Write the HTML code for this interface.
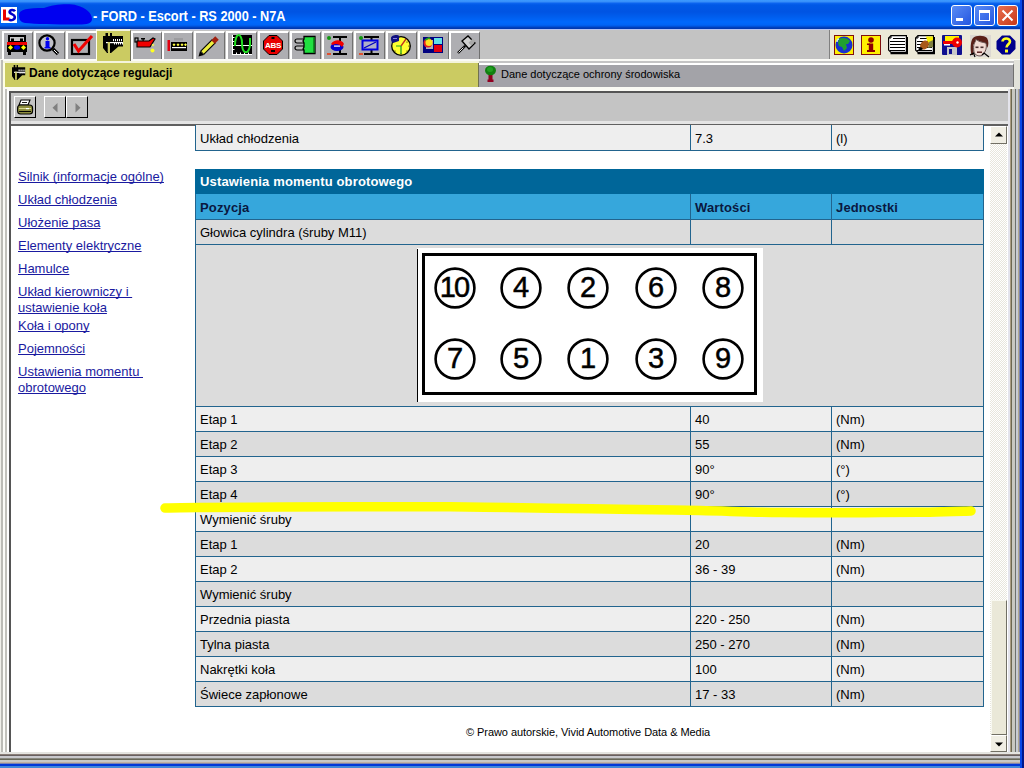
<!DOCTYPE html>
<html><head><meta charset="utf-8">
<style>
*{margin:0;padding:0;box-sizing:border-box}
html,body{width:1024px;height:768px;overflow:hidden;background:#C3C3C3;font-family:"Liberation Sans",sans-serif}
.a{position:absolute}
svg.a{overflow:visible}
#title{left:0;top:0;width:1024px;height:29px;background:linear-gradient(#3C9AFF 0px,#3890FA 1.5px,#0A62EE 3.5px,#0058E6 5px,#0054E3 12px,#005EEE 17px,#0068FC 22px,#0064F6 25px,#0050D8 26.5px,#0038B0 28px,#0038B0 29px)}
#ttext{left:93px;top:8px;color:#fff;font-weight:bold;font-size:14px;line-height:17px;white-space:nowrap;transform:scaleX(0.91);transform-origin:0 0;letter-spacing:0px}
.wb{top:5px;width:21px;height:21px;border:1px solid #fff;border-radius:3px}
#rframe{left:1020px;top:0;width:4px;height:768px;background:linear-gradient(90deg,#0848E8 0 2px,#00188C 2px 4px)}
#bframe{left:0;top:764px;width:1020px;height:4px;background:linear-gradient(#0038D8 0 2px,#4088D8 2px 4px)}
.t{font-size:13px;line-height:15px;color:#000;white-space:nowrap}
.num{width:60px;text-align:center;font-size:29px;line-height:34px;color:#000;-webkit-text-stroke:0.5px #000}
</style></head><body>
<!-- title -->
<div id="title" class="a"></div>
<div class="a" style="left:1px;top:7px;width:16px;height:16px;background:#fff"></div>
<svg class="a" style="left:1px;top:7px" width="16" height="16" viewBox="0 0 16 16"><path d="M2 2.5 L5 2.5 L5 10.5 L8.5 10.5 L8.5 13.5 L2 13.5 Z" fill="#E80000"/><path d="M14 4.2 C13 2.6, 9 2.4, 8.6 4.8 C8.3 7.2, 13.6 7, 13.8 9.8 C14 12.8, 10 14, 8 12.5" fill="none" stroke="#0000C8" stroke-width="2.6"/></svg>
<svg class="a" style="left:0;top:0" width="100" height="29" viewBox="0 0 100 29"><path d="M19 15 C19 9, 28 8, 44 8 C52 5, 68 3, 77 5.5 C86 8, 92 13, 92 19 C92 24, 85 25, 75 24.5 C55 24.5, 35 24, 25 23 C20 22, 19 19, 19 15 Z" fill="#0000F0"/></svg>
<div id="ttext" class="a">- FORD - Escort - RS 2000 - N7A</div>
<div class="a wb" style="left:951px;background:linear-gradient(135deg,#5A8CF5,#2456E0)"></div>
<div class="a wb" style="left:974px;background:linear-gradient(135deg,#5A8CF5,#2456E0)"></div>
<div class="a wb" style="left:997px;background:linear-gradient(135deg,#E87050,#C83818)"></div>
<div class="a" style="left:956px;top:18px;width:7px;height:3px;background:#fff"></div>
<div class="a" style="left:979px;top:10px;width:11px;height:11px;border:1px solid #fff;border-top:3px solid #fff"></div>
<svg class="a" style="left:1001px;top:9px" width="13" height="13" viewBox="0 0 13 13"><path d="M1.5 1.5 L11.5 11.5 M11.5 1.5 L1.5 11.5" stroke="#fff" stroke-width="2"/></svg>

<div class="a" style="left:0px;top:29px;width:1020px;height:1px;background:#B8C4F0;"></div>
<div class="a" style="left:0px;top:30px;width:1020px;height:29px;background:#C3C3C3;"></div>
<div class="a" style="left:0px;top:59px;width:1020px;height:2px;background:#FAFAF6;"></div>
<div class="a" style="left:0px;top:61px;width:1020px;height:2px;background:#C4C4C4;"></div>
<div class="a" style="left:2px;top:31px;width:31px;height:28px;background:#AEAEB2;border-left:2px solid #FFFFFF;border-top:2px solid #FFFFFF;border-right:1px solid #707070"></div>
<div class="a" style="left:34px;top:31px;width:31px;height:28px;background:#AEAEB2;border-left:2px solid #FFFFFF;border-top:2px solid #FFFFFF;border-right:1px solid #707070"></div>
<div class="a" style="left:66px;top:31px;width:31px;height:28px;background:#AEAEB2;border-left:2px solid #FFFFFF;border-top:2px solid #FFFFFF;border-right:1px solid #707070"></div>
<div class="a" style="left:131px;top:31px;width:31px;height:28px;background:#AEAEB2;border-left:2px solid #FFFFFF;border-top:2px solid #FFFFFF;border-right:1px solid #707070"></div>
<div class="a" style="left:162px;top:31px;width:31px;height:28px;background:#AEAEB2;border-left:2px solid #FFFFFF;border-top:2px solid #FFFFFF;border-right:1px solid #707070"></div>
<div class="a" style="left:194px;top:31px;width:31px;height:28px;background:#AEAEB2;border-left:2px solid #FFFFFF;border-top:2px solid #FFFFFF;border-right:1px solid #707070"></div>
<div class="a" style="left:226px;top:31px;width:31px;height:28px;background:#AEAEB2;border-left:2px solid #FFFFFF;border-top:2px solid #FFFFFF;border-right:1px solid #707070"></div>
<div class="a" style="left:258px;top:31px;width:31px;height:28px;background:#AEAEB2;border-left:2px solid #FFFFFF;border-top:2px solid #FFFFFF;border-right:1px solid #707070"></div>
<div class="a" style="left:290px;top:31px;width:31px;height:28px;background:#AEAEB2;border-left:2px solid #FFFFFF;border-top:2px solid #FFFFFF;border-right:1px solid #707070"></div>
<div class="a" style="left:322px;top:31px;width:31px;height:28px;background:#AEAEB2;border-left:2px solid #FFFFFF;border-top:2px solid #FFFFFF;border-right:1px solid #707070"></div>
<div class="a" style="left:354px;top:31px;width:31px;height:28px;background:#AEAEB2;border-left:2px solid #FFFFFF;border-top:2px solid #FFFFFF;border-right:1px solid #707070"></div>
<div class="a" style="left:386px;top:31px;width:31px;height:28px;background:#AEAEB2;border-left:2px solid #FFFFFF;border-top:2px solid #FFFFFF;border-right:1px solid #707070"></div>
<div class="a" style="left:418px;top:31px;width:31px;height:28px;background:#AEAEB2;border-left:2px solid #FFFFFF;border-top:2px solid #FFFFFF;border-right:1px solid #707070"></div>
<div class="a" style="left:449px;top:31px;width:31px;height:28px;background:#AEAEB2;border-left:2px solid #FFFFFF;border-top:2px solid #FFFFFF;border-right:1px solid #707070"></div>
<div class="a" style="left:96px;top:29px;width:35px;height:33px;background:#CBCB62;border-left:1px solid #FFFFF0;border-top:2px solid #F4F4E0;border-right:1px solid #6E6E58"></div>
<svg class="a" style="left:7px;top:35px" width="20" height="20" viewBox="0 0 20 20" ><rect x="1" y="0" width="18" height="7" fill="#000"/><rect x="3" y="2" width="14" height="4" fill="#C8C8C8"/><rect x="4" y="3.5" width="3" height="3.5" fill="#000"/><rect x="13" y="3.5" width="3" height="3.5" fill="#000"/>
<rect x="0" y="7" width="20" height="3" fill="#F00000"/><rect x="0" y="10" width="20" height="7" fill="#000"/>
<polygon points="1,12.5 3.5,10 6,12.5 3.5,15" fill="#FFFF00"/><polygon points="14,12.5 16.5,10 19,12.5 16.5,15" fill="#FFFF00"/>
<ellipse cx="10" cy="12.5" rx="3" ry="2.2" fill="#0000F0"/><rect x="1" y="17" width="3" height="3" fill="#000"/><rect x="16" y="17" width="3" height="3" fill="#000"/></svg>
<svg class="a" style="left:37px;top:34px" width="24" height="22" viewBox="0 0 24 22" ><line x1="16" y1="15" x2="21" y2="20" stroke="#000" stroke-width="3.2"/><line x1="17" y1="16" x2="20.5" y2="19.5" stroke="#fff" stroke-width="1"/>
<circle cx="10" cy="9" r="7.6" fill="#C0C0C8" stroke="#000" stroke-width="2.2"/>
<circle cx="10.5" cy="4.8" r="1.7" fill="#0000F0"/><rect x="8.5" y="7" width="4" height="7" fill="#0000F0"/><rect x="7.5" y="13" width="6" height="1.5" fill="#0000F0"/></svg>
<svg class="a" style="left:70px;top:34px" width="24" height="22" viewBox="0 0 24 22" ><rect x="2" y="6" width="17" height="14" fill="none" stroke="#000" stroke-width="2.2"/>
<polyline points="4,10 8.5,17 22,2" fill="none" stroke="#F00000" stroke-width="3"/></svg>
<svg class="a" style="left:103px;top:33px" width="21" height="21" viewBox="0 0 21 21" ><polygon points="0,3 2.5,3 2.5,0 5,0 5,3 7,3 7,0 9,0 9,3 20,3 20,13.5 15.5,13.5 8,20 7,20 7,9 5,9 5,20 4,20 0,15" fill="#000"/>
<rect x="3" y="9" width="17" height="1.2" fill="#fff"/><rect x="4.7" y="9" width="2.3" height="10" fill="#CBCB62"/>
<g fill="#fff"><rect x="10" y="6" width="1" height="2.2"/><rect x="12" y="6" width="1" height="2.2"/><rect x="14" y="6" width="1" height="2.2"/><rect x="16" y="6" width="1" height="2.2"/><rect x="18" y="6" width="1" height="2.2"/>
<rect x="11" y="10" width="1" height="1.5"/><rect x="13" y="10" width="1" height="1.5"/><rect x="15" y="10" width="1" height="1.5"/><rect x="17" y="10" width="1" height="1.5"/><rect x="19" y="10" width="1" height="1.5"/></g></svg>
<svg class="a" style="left:134px;top:36px" width="22" height="20" viewBox="0 0 22 20" ><rect x="1" y="2" width="3" height="4" fill="none" stroke="#000" stroke-width="1.2"/>
<rect x="7" y="2" width="4" height="1.5" fill="#000"/><rect x="8.5" y="3" width="1.2" height="2" fill="#000"/>
<polygon points="3,5 15,5 19,2 21,3 16,11 3,11" fill="#F00000" stroke="#000" stroke-width="1.2"/>
<circle cx="19" cy="9" r="1.3" fill="#E8E860"/><circle cx="18.5" cy="14.5" r="2" fill="#FFFF20"/></svg>
<svg class="a" style="left:166px;top:37px" width="22" height="18" viewBox="0 0 22 18" ><rect x="8" y="1" width="9" height="2.5" fill="#9C9CA0"/><rect x="1.5" y="3" width="2.5" height="11" fill="#E00010"/>
<rect x="5" y="5" width="16" height="9" fill="#000"/><rect x="6" y="10" width="14" height="1.2" fill="#fff"/>
<g fill="#FFFF40"><polygon points="8,6.3 9.5,7.8 8,9.3 6.5,7.8"/><polygon points="12,6.3 13.5,7.8 12,9.3 10.5,7.8"/><polygon points="16,6.3 17.5,7.8 16,9.3 14.5,7.8"/><polygon points="19.5,6.3 21,7.8 19.5,9.3 18,7.8"/></g></svg>
<svg class="a" style="left:198px;top:35px" width="22" height="22" viewBox="0 0 22 22" ><line x1="4" y1="18" x2="16" y2="6" stroke="#000" stroke-width="5.5"/><line x1="4.5" y1="17.5" x2="16" y2="6" stroke="#F0F040" stroke-width="3.2"/>
<line x1="15" y1="7" x2="19" y2="3" stroke="#A02010" stroke-width="5"/><polygon points="0.5,21.5 2,16 6,20" fill="#000"/></svg>
<svg class="a" style="left:232px;top:35px" width="20" height="20" viewBox="0 0 20 20" ><rect x="0" y="0" width="20" height="20" fill="#000"/><rect x="0" y="0" width="1" height="20" fill="#fff"/><rect x="0" y="19" width="20" height="1" fill="#fff"/>
<rect x="1" y="10" width="19" height="1" fill="#fff"/><g fill="#fff"><rect x="1" y="2" width="1.5" height="1"/><rect x="1" y="6" width="1.5" height="1"/><rect x="1" y="14" width="1.5" height="1"/><rect x="4" y="17.5" width="1" height="1.5"/><rect x="8" y="17.5" width="1" height="1.5"/><rect x="12" y="17.5" width="1" height="1.5"/><rect x="16" y="17.5" width="1" height="1.5"/></g>
<path d="M3 11 C3 -4, 10 -2, 10 8 C10 20, 17 20, 18 10 L18 3" fill="none" stroke="#20E020" stroke-width="2"/></svg>
<svg class="a" style="left:263px;top:35px" width="20" height="20" viewBox="0 0 20 20" ><polygon points="6,0.5 14,0.5 19.5,6 19.5,14 14,19.5 6,19.5 0.5,14 0.5,6" fill="#E80000" stroke="#000" stroke-width="1"/>
<text x="10" y="13.2" text-anchor="middle" font-family="Liberation Sans" font-weight="bold" font-size="8" fill="#fff" letter-spacing="-0.3">ABS</text><rect x="8" y="15" width="4" height="2" fill="#000"/><rect x="8.5" y="2" width="3" height="2" fill="#000"/></svg>
<svg class="a" style="left:294px;top:35px" width="22" height="20" viewBox="0 0 22 20" ><rect x="1" y="4" width="10" height="4" rx="2" fill="#B8B8B8" stroke="#000" stroke-width="1.2"/><rect x="1" y="11" width="10" height="4" rx="2" fill="#B8B8B8" stroke="#000" stroke-width="1.2"/>
<path d="M10 1.5 L21 1.5 L21 18.5 L10 18.5 L10 15 L9 14 L10 12 L10 8 L9 6 L10 4 Z" fill="#20E040" stroke="#000" stroke-width="1.3"/><rect x="19" y="2" width="1.5" height="16" fill="#109020"/></svg>
<svg class="a" style="left:326px;top:35px" width="22" height="22" viewBox="0 0 22 22" ><circle cx="3" cy="3" r="2" fill="#109810"/><rect x="1" y="18" width="4" height="2" fill="#E05030"/>
<rect x="7" y="1" width="14" height="2" fill="#000"/><rect x="7" y="18" width="14" height="2" fill="#000"/><rect x="13" y="2" width="2" height="17" fill="#000"/>
<ellipse cx="11" cy="12" rx="6.5" ry="4" fill="#0000D0"/><path d="M5 9 C8 4, 16 4, 18 9 L16 12 C14 9, 9 8, 7 10 Z" fill="#F00000"/><rect x="8" y="10.5" width="6" height="1.2" fill="#fff"/></svg>
<svg class="a" style="left:358px;top:35px" width="22" height="22" viewBox="0 0 22 22" ><circle cx="3" cy="3" r="2" fill="#109810"/><rect x="1" y="18" width="4" height="2" fill="#E05030"/>
<rect x="6" y="1" width="15" height="2" fill="#000"/><rect x="6" y="18" width="15" height="2" fill="#000"/><rect x="12.5" y="2" width="2" height="17" fill="#000"/>
<rect x="4.5" y="5.5" width="15" height="9" fill="#B0B0C8" stroke="#0000E0" stroke-width="2"/><line x1="6" y1="13" x2="18" y2="7" stroke="#0000C0" stroke-width="1.3"/></svg>
<svg class="a" style="left:390px;top:34px" width="22" height="22" viewBox="0 0 22 22" ><circle cx="11" cy="12" r="9.3" fill="#FFFF30" stroke="#000" stroke-width="1.3"/>
<path d="M1 4 C1 1, 8 0, 9 2 L9 7 L3 9 C1 8, 1 6, 1 4Z" fill="#101080"/><rect x="3" y="4" width="4" height="1" fill="#8080E0"/>
<line x1="11" y1="12" x2="16" y2="5" stroke="#C03020" stroke-width="1.3"/><line x1="11" y1="12" x2="11" y2="20" stroke="#20A020" stroke-width="1.3"/><line x1="11" y1="12" x2="6" y2="12" stroke="#20A020" stroke-width="1"/>
<g fill="#000"><circle cx="17" cy="8" r="0.6"/><circle cx="19" cy="12" r="0.6"/><circle cx="17" cy="17" r="0.6"/><circle cx="11" cy="20" r="0.6"/><circle cx="5" cy="17" r="0.6"/></g></svg>
<svg class="a" style="left:422px;top:36px" width="22" height="18" viewBox="0 0 22 18" ><rect x="1" y="1" width="20" height="16" fill="#000080"/><rect x="4" y="4" width="7" height="9" fill="#B0B0B8"/>
<circle cx="6" cy="7" r="4.5" fill="#E02020"/><circle cx="7" cy="6.5" r="3.5" fill="#FFE020"/><path d="M3 4 L7 2 L8 3" stroke="#20A020" stroke-width="1.5" fill="none"/>
<rect x="12" y="2" width="8" height="6" fill="#60E0E8"/><rect x="12" y="9" width="8" height="7" fill="#E00010"/></svg>
<svg class="a" style="left:455px;top:35px" width="22" height="22" viewBox="0 0 22 22" ><polygon points="7,6 13,1 20,8 14,14" fill="#D0D0D0" stroke="#000" stroke-width="1.3"/><rect x="15" y="4" width="4" height="6" fill="#A8A8A8" transform="rotate(45 17 7)"/>
<line x1="3" y1="18" x2="9" y2="12" stroke="#000" stroke-width="2.4"/><line x1="3.5" y1="17.5" x2="8.5" y2="12.5" stroke="#fff" stroke-width="0.9"/><circle cx="9.5" cy="11.5" r="1.2" fill="#000"/></svg>
<div class="a" style="left:829px;top:30px;width:191px;height:29px;background:#ECE9D8;border-left:1px solid #808080"></div>
<svg class="a" style="left:834px;top:35px" width="20" height="20" viewBox="0 0 20 20" ><rect x="0.5" y="0.5" width="19" height="19" fill="#FFF000" stroke="#801010" stroke-width="1"/>
<circle cx="10" cy="10" r="8.5" fill="#1830D0"/><path d="M5 4 C8 2, 14 3, 16 6 L14 9 L12 9 L13 13 L10 16 L8 12 L5 11 L4 8 Z" fill="#20A030"/><path d="M3 7 C3 5, 4 4, 5 4" stroke="#D0E8F0" stroke-width="1.5" fill="none"/></svg>
<svg class="a" style="left:861px;top:35px" width="20" height="20" viewBox="0 0 20 20" ><rect x="0.5" y="0.5" width="19" height="19" fill="#FFF000" stroke="#801010" stroke-width="1"/>
<circle cx="10" cy="5" r="2.8" fill="#8C0000"/><rect x="7.8" y="8.5" width="4.4" height="8" fill="#8C0000"/><rect x="6" y="15" width="8" height="2" fill="#8C0000"/><rect x="6" y="8.5" width="3" height="1.5" fill="#8C0000"/></svg>
<svg class="a" style="left:888px;top:35px" width="20" height="20" viewBox="0 0 20 20" ><path d="M3 0.6 L18.4 0.6 L18.4 17.4 L3 17.4 L0.6 15 L0.6 3 Z" fill="#fff" stroke="#000" stroke-width="1.2"/><path d="M2.5 18.6 L19.4 18.6 L19.4 2" fill="none" stroke="#000" stroke-width="1.2"/><path d="M0.6 3 L3 3 L3 0.6" fill="none" stroke="#000" stroke-width="1"/>
<g fill="#000"><rect x="5" y="3" width="12" height="1"/><rect x="2" y="6" width="15" height="1"/><rect x="2" y="9" width="15" height="1"/><rect x="2" y="12" width="15" height="1"/><rect x="2" y="15" width="15" height="1"/></g></svg>
<svg class="a" style="left:915px;top:35px" width="20" height="20" viewBox="0 0 20 20" ><path d="M3 0.6 L18.4 0.6 L18.4 17.4 L3 17.4 L0.6 15 L0.6 3 Z" fill="#fff" stroke="#000" stroke-width="1.2"/><path d="M2.5 18.6 L19.4 18.6 L19.4 2" fill="none" stroke="#000" stroke-width="1.2"/><path d="M0.6 3 L3 3 L3 0.6" fill="none" stroke="#000" stroke-width="1"/>
<g fill="#000"><rect x="5" y="3" width="12" height="1"/><rect x="2" y="6" width="15" height="1"/><rect x="2" y="9" width="15" height="1"/><rect x="2" y="12" width="15" height="1"/><rect x="2" y="15" width="15" height="1"/></g>
<polygon points="11,1.5 18,1.5 18,6 13,9" fill="#F8F000"/><polygon points="14,7 18,5 18,12 13,13" fill="#808040"/><ellipse cx="9.5" cy="10" rx="4" ry="5" fill="#A85818" transform="rotate(40 9.5 10)"/><path d="M3 14 L6 12 L8 14 L5 16Z" fill="#000"/></svg>
<svg class="a" style="left:942px;top:35px" width="20" height="20" viewBox="0 0 20 20" ><rect x="0" y="0" width="20" height="20" rx="1" fill="#101090"/><rect x="3" y="1" width="14" height="8" fill="#FFF000"/>
<rect x="5" y="12" width="10" height="8" fill="#C8C8C8"/><rect x="7" y="14" width="3" height="5" fill="#101090"/>
<circle cx="15" cy="7.5" r="5" fill="#F00000"/><rect x="1" y="6" width="12" height="3" fill="#F00000"/><rect x="2" y="9" width="6" height="1.5" fill="#fff"/><circle cx="15.5" cy="7.5" r="1.2" fill="#fff"/></svg>
<svg class="a" style="left:969px;top:35px" width="22" height="23" viewBox="0 0 22 23" ><rect x="1" y="0" width="21" height="22" fill="#DCD8D2"/>
<path d="M2.5 20 C1 14, 1.5 6, 4 3 C7 0, 15 0, 18 3 C20 6, 19.5 10, 18.5 13 L17 8 C14 7, 9 6, 7 4 C6 7, 5 9, 4 10 C4 14, 5 17, 4 20Z" fill="#5A2018"/>
<path d="M5 9 C6 7, 7 5, 7.5 4.5 C9 6.5, 14 7.5, 17 8 C18 12, 17 17, 13 20.5 C10 21.5, 6 20.5, 5 17 C4.5 14, 4.5 11, 5 9Z" fill="#F2DCD4" stroke="#2A1010" stroke-width="0.7"/>
<rect x="6.5" y="11.5" width="3" height="1.6" fill="#4A3030"/><rect x="11.5" y="11.5" width="3" height="1.6" fill="#4A3030"/><rect x="8" y="16.5" width="5" height="1.4" fill="#501818"/>
<path d="M1 20 L4.5 18 L6 22 M13 20 L15 18 L20 22" stroke="#000" stroke-width="1.2" fill="none"/></svg>
<svg class="a" style="left:996px;top:35px" width="20" height="20" viewBox="0 0 20 20" ><polygon points="6,0.5 14,0.5 19.5,6 19.5,14 14,19.5 6,19.5 0.5,14 0.5,6" fill="#00008C"/>
<path d="M6.5 6.5 C6.5 2.5, 14 2.5, 14 6.5 C14 9, 10.5 9.5, 10.5 12.5" fill="none" stroke="#FFFF20" stroke-width="2.6"/><rect x="9" y="14.5" width="3" height="3" fill="#FFFF20"/></svg>

<!-- tabs -->
<div class="a" style="left:3px;top:61px;width:476px;height:2px;background:#F4F4DC"></div>
<div class="a" style="left:3px;top:63px;width:476px;height:26px;background:#CBCB62;border-left:2px solid #FFFFE0;border-right:1px solid #707050"></div>
<div class="a" style="left:29px;top:66px;font:bold 12px 'Liberation Sans';color:#000">Dane dotyczące regulacji</div>
<div class="a" style="left:479px;top:63px;width:535px;height:25px;background:#A3A3A8;border-top:2px solid #fff;border-right:1px solid #707070"></div>
<div class="a" style="left:501px;top:68px;font:11px 'Liberation Sans';color:#000">Dane dotyczące ochrony środowiska</div>
<div class="a" style="left:3px;top:87px;width:1017px;height:4px;background:#FAFAF4"></div>

<!-- panel -->
<div class="a" style="left:9px;top:91px;width:1002px;height:663px;border-left:2px solid #555;border-top:2px solid #555;background:#C4C4C4"></div>
<div class="a" style="left:11px;top:121px;width:997px;height:3px;background:#E4E4E4"></div>
<div class="a" style="left:11px;top:124px;width:997px;height:2px;background:#606060"></div>
<div id="content" class="a" style="left:11px;top:126px;width:997px;height:626px;background:#fff;overflow:hidden"></div>

<svg class="a" style="left:12px;top:65px" width="14" height="16" viewBox="0 0 14 16"><g transform="scale(0.66 0.75)"><polygon points="0,3 2.5,3 2.5,0 5,0 5,3 7,3 7,0 9,0 9,3 20,3 20,13.5 15.5,13.5 8,20 7,20 7,9 5,9 5,20 4,20 0,15" fill="#000"/>
<rect x="3" y="9" width="17" height="1.5" fill="#fff"/><rect x="5" y="9" width="2" height="10" fill="#CBCB62"/>
<g fill="#fff"><rect x="10" y="6" width="1.5" height="2.2"/><rect x="13" y="6" width="1.5" height="2.2"/><rect x="16" y="6" width="1.5" height="2.2"/><rect x="19" y="6" width="1" height="2.2"/>
<rect x="11.5" y="10" width="1.5" height="1.5"/><rect x="14.5" y="10" width="1.5" height="1.5"/><rect x="17.5" y="10" width="1.5" height="1.5"/></g></g></svg>
<svg class="a" style="left:484px;top:65px" width="14" height="18" viewBox="0 0 14 18"><rect x="4.5" y="8" width="4" height="8" fill="#900020"/><rect x="3.5" y="14.5" width="6" height="2.5" fill="#900020"/><ellipse cx="6.5" cy="5.5" rx="5.5" ry="4.8" fill="#108010"/><ellipse cx="6" cy="4.5" rx="3" ry="2.5" fill="#20A020"/></svg>
<div class="a" style="left:14px;top:96px;width:22px;height:22px;background:#C4C4C4;border-left:1px solid #fff;border-top:1px solid #fff;border-right:1px solid #000;border-bottom:1px solid #000"></div>
<svg class="a" style="left:17px;top:99px" width="17" height="16" viewBox="0 0 17 16"><path d="M4 1 L13 1 L11 6 L2 6Z" fill="#fff" stroke="#000" stroke-width="1.1"/><rect x="5" y="3" width="5" height="0.9" fill="#000"/>
<rect x="0.6" y="6" width="15" height="9" rx="3" fill="#8E8E3E" stroke="#000" stroke-width="1.1"/><rect x="2" y="9" width="12" height="1" fill="#D8D890"/><rect x="2" y="12" width="12" height="1" fill="#000"/><rect x="9" y="9" width="3" height="1.2" fill="#fff"/></svg>
<div class="a" style="left:44px;top:96px;width:22px;height:22px;background:#C4C4C4;border-left:1px solid #fff;border-top:1px solid #fff;border-right:1px solid #000;border-bottom:1px solid #000"></div>
<div class="a" style="left:66px;top:96px;width:22px;height:22px;background:#C4C4C4;border-left:1px solid #fff;border-top:1px solid #fff;border-right:1px solid #000;border-bottom:1px solid #000"></div>
<svg class="a" style="left:52px;top:103px" width="6" height="10" viewBox="0 0 6 10"><polygon points="5.5,0 5.5,9.5 0.5,4.75" fill="#808080"/></svg>
<svg class="a" style="left:75px;top:103px" width="6" height="10" viewBox="0 0 6 10"><polygon points="0.5,0 0.5,9.5 5.5,4.75" fill="#808080"/></svg>
<div class="a t" style="left:18px;top:169px;color:#1A1AA0;text-decoration:underline;text-decoration-skip-ink:none">Silnik (informacje ogólne)</div>
<div class="a t" style="left:18px;top:192px;color:#1A1AA0;text-decoration:underline;text-decoration-skip-ink:none">Układ chłodzenia</div>
<div class="a t" style="left:18px;top:215px;color:#1A1AA0;text-decoration:underline;text-decoration-skip-ink:none">Ułożenie pasa</div>
<div class="a t" style="left:18px;top:238px;color:#1A1AA0;text-decoration:underline;text-decoration-skip-ink:none">Elementy elektryczne</div>
<div class="a t" style="left:18px;top:261px;color:#1A1AA0;text-decoration:underline;text-decoration-skip-ink:none">Hamulce</div>
<div class="a t" style="left:18px;top:284px;color:#1A1AA0;text-decoration:underline;text-decoration-skip-ink:none">Układ kierowniczy i&nbsp;</div>
<div class="a t" style="left:18px;top:300px;color:#1A1AA0;text-decoration:underline;text-decoration-skip-ink:none">ustawienie koła</div>
<div class="a t" style="left:18px;top:318px;color:#1A1AA0;text-decoration:underline;text-decoration-skip-ink:none">Koła i opony</div>
<div class="a t" style="left:18px;top:341px;color:#1A1AA0;text-decoration:underline;text-decoration-skip-ink:none">Pojemności</div>
<div class="a t" style="left:18px;top:364px;color:#1A1AA0;text-decoration:underline;text-decoration-skip-ink:none">Ustawienia momentu&nbsp;</div>
<div class="a t" style="left:18px;top:380px;color:#1A1AA0;text-decoration:underline;text-decoration-skip-ink:none">obrotowego</div>
<div class="a" style="left:195px;top:125px;width:789px;height:25px;background:#EEEEEE"></div>
<div class="a" style="left:195px;top:125px;width:1px;height:26px;background:#22648E"></div>
<div class="a" style="left:690px;top:125px;width:1px;height:26px;background:#22648E"></div>
<div class="a" style="left:831px;top:125px;width:1px;height:26px;background:#22648E"></div>
<div class="a" style="left:983px;top:125px;width:1px;height:26px;background:#22648E"></div>
<div class="a" style="left:195px;top:150px;width:789px;height:1px;background:#22648E"></div>
<div class="a t" style="left:200px;top:131px;">Układ chłodzenia</div>
<div class="a t" style="left:695px;top:131px;">7.3</div>
<div class="a t" style="left:836px;top:131px;">(l)</div>
<div class="a" style="left:195px;top:169px;width:789px;height:25px;background:#006699"></div>
<div class="a t" style="left:200px;top:174px;color:#fff;font-weight:bold;letter-spacing:0.15px">Ustawienia momentu obrotowego</div>
<div class="a" style="left:195px;top:194px;width:789px;height:25px;background:#36A7DC"></div>
<div class="a" style="left:195px;top:194px;width:1px;height:26px;background:#22648E"></div>
<div class="a" style="left:690px;top:194px;width:1px;height:26px;background:#22648E"></div>
<div class="a" style="left:831px;top:194px;width:1px;height:26px;background:#22648E"></div>
<div class="a" style="left:983px;top:194px;width:1px;height:26px;background:#22648E"></div>
<div class="a" style="left:195px;top:219px;width:789px;height:1px;background:#22648E"></div>
<div class="a t" style="left:200px;top:200px;color:#0A1840;font-weight:bold;letter-spacing:0.15px">Pozycja</div>
<div class="a t" style="left:695px;top:200px;color:#0A1840;font-weight:bold;letter-spacing:0.15px">Wartości</div>
<div class="a t" style="left:836px;top:200px;color:#0A1840;font-weight:bold;letter-spacing:0.15px">Jednostki</div>
<div class="a" style="left:195px;top:220px;width:789px;height:24px;background:#DCDCDC"></div>
<div class="a" style="left:195px;top:220px;width:1px;height:25px;background:#22648E"></div>
<div class="a" style="left:690px;top:220px;width:1px;height:25px;background:#22648E"></div>
<div class="a" style="left:831px;top:220px;width:1px;height:25px;background:#22648E"></div>
<div class="a" style="left:983px;top:220px;width:1px;height:25px;background:#22648E"></div>
<div class="a" style="left:195px;top:244px;width:789px;height:1px;background:#22648E"></div>
<div class="a t" style="left:200px;top:225px;">Głowica cylindra (śruby M11)</div>
<div class="a" style="left:195px;top:245px;width:789px;height:161px;background:#DCDCDC"></div>
<div class="a" style="left:195px;top:245px;width:1px;height:162px;background:#22648E"></div>
<div class="a" style="left:983px;top:245px;width:1px;height:162px;background:#22648E"></div>
<div class="a" style="left:195px;top:406px;width:789px;height:1px;background:#22648E"></div>
<div class="a" style="left:195px;top:407px;width:789px;height:24px;background:#EEEEEE"></div>
<div class="a" style="left:195px;top:407px;width:1px;height:25px;background:#22648E"></div>
<div class="a" style="left:690px;top:407px;width:1px;height:25px;background:#22648E"></div>
<div class="a" style="left:831px;top:407px;width:1px;height:25px;background:#22648E"></div>
<div class="a" style="left:983px;top:407px;width:1px;height:25px;background:#22648E"></div>
<div class="a" style="left:195px;top:431px;width:789px;height:1px;background:#22648E"></div>
<div class="a t" style="left:200px;top:412px;">Etap 1</div>
<div class="a t" style="left:695px;top:412px;">40</div>
<div class="a t" style="left:836px;top:412px;">(Nm)</div>
<div class="a" style="left:195px;top:432px;width:789px;height:24px;background:#DCDCDC"></div>
<div class="a" style="left:195px;top:432px;width:1px;height:25px;background:#22648E"></div>
<div class="a" style="left:690px;top:432px;width:1px;height:25px;background:#22648E"></div>
<div class="a" style="left:831px;top:432px;width:1px;height:25px;background:#22648E"></div>
<div class="a" style="left:983px;top:432px;width:1px;height:25px;background:#22648E"></div>
<div class="a" style="left:195px;top:456px;width:789px;height:1px;background:#22648E"></div>
<div class="a t" style="left:200px;top:437px;">Etap 2</div>
<div class="a t" style="left:695px;top:437px;">55</div>
<div class="a t" style="left:836px;top:437px;">(Nm)</div>
<div class="a" style="left:195px;top:457px;width:789px;height:24px;background:#EEEEEE"></div>
<div class="a" style="left:195px;top:457px;width:1px;height:25px;background:#22648E"></div>
<div class="a" style="left:690px;top:457px;width:1px;height:25px;background:#22648E"></div>
<div class="a" style="left:831px;top:457px;width:1px;height:25px;background:#22648E"></div>
<div class="a" style="left:983px;top:457px;width:1px;height:25px;background:#22648E"></div>
<div class="a" style="left:195px;top:481px;width:789px;height:1px;background:#22648E"></div>
<div class="a t" style="left:200px;top:462px;">Etap 3</div>
<div class="a t" style="left:695px;top:462px;">90°</div>
<div class="a t" style="left:836px;top:462px;">(°)</div>
<div class="a" style="left:195px;top:482px;width:789px;height:24px;background:#DCDCDC"></div>
<div class="a" style="left:195px;top:482px;width:1px;height:25px;background:#22648E"></div>
<div class="a" style="left:690px;top:482px;width:1px;height:25px;background:#22648E"></div>
<div class="a" style="left:831px;top:482px;width:1px;height:25px;background:#22648E"></div>
<div class="a" style="left:983px;top:482px;width:1px;height:25px;background:#22648E"></div>
<div class="a" style="left:195px;top:506px;width:789px;height:1px;background:#22648E"></div>
<div class="a t" style="left:200px;top:487px;">Etap 4</div>
<div class="a t" style="left:695px;top:487px;">90°</div>
<div class="a t" style="left:836px;top:487px;">(°)</div>
<div class="a" style="left:195px;top:507px;width:789px;height:24px;background:#EEEEEE"></div>
<div class="a" style="left:195px;top:507px;width:1px;height:25px;background:#22648E"></div>
<div class="a" style="left:690px;top:507px;width:1px;height:25px;background:#22648E"></div>
<div class="a" style="left:831px;top:507px;width:1px;height:25px;background:#22648E"></div>
<div class="a" style="left:983px;top:507px;width:1px;height:25px;background:#22648E"></div>
<div class="a" style="left:195px;top:531px;width:789px;height:1px;background:#22648E"></div>
<div class="a t" style="left:200px;top:512px;">Wymienić śruby</div>
<div class="a" style="left:195px;top:532px;width:789px;height:24px;background:#DCDCDC"></div>
<div class="a" style="left:195px;top:532px;width:1px;height:25px;background:#22648E"></div>
<div class="a" style="left:690px;top:532px;width:1px;height:25px;background:#22648E"></div>
<div class="a" style="left:831px;top:532px;width:1px;height:25px;background:#22648E"></div>
<div class="a" style="left:983px;top:532px;width:1px;height:25px;background:#22648E"></div>
<div class="a" style="left:195px;top:556px;width:789px;height:1px;background:#22648E"></div>
<div class="a t" style="left:200px;top:537px;">Etap 1</div>
<div class="a t" style="left:695px;top:537px;">20</div>
<div class="a t" style="left:836px;top:537px;">(Nm)</div>
<div class="a" style="left:195px;top:557px;width:789px;height:24px;background:#EEEEEE"></div>
<div class="a" style="left:195px;top:557px;width:1px;height:25px;background:#22648E"></div>
<div class="a" style="left:690px;top:557px;width:1px;height:25px;background:#22648E"></div>
<div class="a" style="left:831px;top:557px;width:1px;height:25px;background:#22648E"></div>
<div class="a" style="left:983px;top:557px;width:1px;height:25px;background:#22648E"></div>
<div class="a" style="left:195px;top:581px;width:789px;height:1px;background:#22648E"></div>
<div class="a t" style="left:200px;top:562px;">Etap 2</div>
<div class="a t" style="left:695px;top:562px;">36 - 39</div>
<div class="a t" style="left:836px;top:562px;">(Nm)</div>
<div class="a" style="left:195px;top:582px;width:789px;height:24px;background:#DCDCDC"></div>
<div class="a" style="left:195px;top:582px;width:1px;height:25px;background:#22648E"></div>
<div class="a" style="left:690px;top:582px;width:1px;height:25px;background:#22648E"></div>
<div class="a" style="left:831px;top:582px;width:1px;height:25px;background:#22648E"></div>
<div class="a" style="left:983px;top:582px;width:1px;height:25px;background:#22648E"></div>
<div class="a" style="left:195px;top:606px;width:789px;height:1px;background:#22648E"></div>
<div class="a t" style="left:200px;top:587px;">Wymienić śruby</div>
<div class="a" style="left:195px;top:607px;width:789px;height:24px;background:#EEEEEE"></div>
<div class="a" style="left:195px;top:607px;width:1px;height:25px;background:#22648E"></div>
<div class="a" style="left:690px;top:607px;width:1px;height:25px;background:#22648E"></div>
<div class="a" style="left:831px;top:607px;width:1px;height:25px;background:#22648E"></div>
<div class="a" style="left:983px;top:607px;width:1px;height:25px;background:#22648E"></div>
<div class="a" style="left:195px;top:631px;width:789px;height:1px;background:#22648E"></div>
<div class="a t" style="left:200px;top:612px;">Przednia piasta</div>
<div class="a t" style="left:695px;top:612px;">220 - 250</div>
<div class="a t" style="left:836px;top:612px;">(Nm)</div>
<div class="a" style="left:195px;top:632px;width:789px;height:24px;background:#DCDCDC"></div>
<div class="a" style="left:195px;top:632px;width:1px;height:25px;background:#22648E"></div>
<div class="a" style="left:690px;top:632px;width:1px;height:25px;background:#22648E"></div>
<div class="a" style="left:831px;top:632px;width:1px;height:25px;background:#22648E"></div>
<div class="a" style="left:983px;top:632px;width:1px;height:25px;background:#22648E"></div>
<div class="a" style="left:195px;top:656px;width:789px;height:1px;background:#22648E"></div>
<div class="a t" style="left:200px;top:637px;">Tylna piasta</div>
<div class="a t" style="left:695px;top:637px;">250 - 270</div>
<div class="a t" style="left:836px;top:637px;">(Nm)</div>
<div class="a" style="left:195px;top:657px;width:789px;height:24px;background:#EEEEEE"></div>
<div class="a" style="left:195px;top:657px;width:1px;height:25px;background:#22648E"></div>
<div class="a" style="left:690px;top:657px;width:1px;height:25px;background:#22648E"></div>
<div class="a" style="left:831px;top:657px;width:1px;height:25px;background:#22648E"></div>
<div class="a" style="left:983px;top:657px;width:1px;height:25px;background:#22648E"></div>
<div class="a" style="left:195px;top:681px;width:789px;height:1px;background:#22648E"></div>
<div class="a t" style="left:200px;top:662px;">Nakrętki koła</div>
<div class="a t" style="left:695px;top:662px;">100</div>
<div class="a t" style="left:836px;top:662px;">(Nm)</div>
<div class="a" style="left:195px;top:682px;width:789px;height:24px;background:#DCDCDC"></div>
<div class="a" style="left:195px;top:682px;width:1px;height:25px;background:#22648E"></div>
<div class="a" style="left:690px;top:682px;width:1px;height:25px;background:#22648E"></div>
<div class="a" style="left:831px;top:682px;width:1px;height:25px;background:#22648E"></div>
<div class="a" style="left:983px;top:682px;width:1px;height:25px;background:#22648E"></div>
<div class="a" style="left:195px;top:706px;width:789px;height:1px;background:#22648E"></div>
<div class="a t" style="left:200px;top:687px;">Świece zapłonowe</div>
<div class="a t" style="left:695px;top:687px;">17 - 33</div>
<div class="a t" style="left:836px;top:687px;">(Nm)</div>
<div class="a" style="left:417px;top:248px;width:346px;height:154px;background:#FFFFFF"></div>
<div class="a" style="left:417px;top:249px;width:1px;height:153px;background:#000"></div>
<div class="a" style="left:422px;top:253px;width:335px;height:142px;border:3px solid #000"></div>
<svg class="a" style="left:417px;top:248px" width="346" height="154" viewBox="417 248 346 154"><circle cx="455" cy="288" r="19.4" fill="none" stroke="#000" stroke-width="2.6"/><circle cx="521" cy="288" r="19.4" fill="none" stroke="#000" stroke-width="2.6"/><circle cx="588" cy="288" r="19.4" fill="none" stroke="#000" stroke-width="2.6"/><circle cx="656" cy="288" r="19.4" fill="none" stroke="#000" stroke-width="2.6"/><circle cx="723" cy="288" r="19.4" fill="none" stroke="#000" stroke-width="2.6"/><circle cx="455" cy="359" r="19.4" fill="none" stroke="#000" stroke-width="2.6"/><circle cx="521" cy="359" r="19.4" fill="none" stroke="#000" stroke-width="2.6"/><circle cx="588" cy="359" r="19.4" fill="none" stroke="#000" stroke-width="2.6"/><circle cx="656" cy="359" r="19.4" fill="none" stroke="#000" stroke-width="2.6"/><circle cx="723" cy="359" r="19.4" fill="none" stroke="#000" stroke-width="2.6"/></svg>
<div class="a num" style="left:425px;top:270px;letter-spacing:-2px;text-indent:-2px;">10</div>
<div class="a num" style="left:491px;top:270px;">4</div>
<div class="a num" style="left:558px;top:270px;">2</div>
<div class="a num" style="left:626px;top:270px;">6</div>
<div class="a num" style="left:693px;top:270px;">8</div>
<div class="a num" style="left:425px;top:341px">7</div>
<div class="a num" style="left:491px;top:341px">5</div>
<div class="a num" style="left:558px;top:341px">1</div>
<div class="a num" style="left:626px;top:341px">3</div>
<div class="a num" style="left:693px;top:341px">9</div>
<div class="a" style="left:466px;top:726px;font-size:11px;line-height:13px;color:#000;white-space:nowrap;letter-spacing:-0.06px">© Prawo autorskie, Vivid Automotive Data &amp; Media</div>
<svg class="a" style="left:0;top:0" width="1024" height="768"><path d="M165 508 C170.8 507.92, 169.2 507.70, 200 507.5 C230.8 507.30, 308.3 506.92, 350 506.8 C391.7 506.68, 416.7 506.57, 450 506.8 C483.3 507.03, 521.7 507.78, 550 508.2 C578.3 508.62, 595.0 508.90, 620 509.3 C645.0 509.70, 673.3 510.05, 700 510.6 C726.7 511.15, 750.0 512.27, 780 512.6 C810.0 512.93, 855.0 512.67, 880 512.6 C905.0 512.53, 914.8 512.47, 930 512.2 C945.2 511.93, 964.2 511.20, 971 511" fill="none" stroke="#FFFF00" stroke-width="9.5" stroke-linecap="round"/></svg>

<!-- frame lines left -->
<div class="a" style="left:0;top:60px;width:1px;height:704px;background:#F0F0EA"></div>
<div class="a" style="left:1px;top:60px;width:2px;height:704px;background:#BCBCB6"></div>
<div class="a" style="left:7px;top:91px;width:2px;height:663px;background:#fff"></div>
<div class="a" style="left:5px;top:89px;width:2px;height:670px;background:#C2C2BC"></div>
<div class="a" style="left:3px;top:89px;width:2px;height:675px;background:#FCFCF8"></div>

<!-- scrollbar -->
<div class="a" style="left:990px;top:126px;width:17px;height:626px;background:repeating-conic-gradient(#E8E6DC 0 25%,#FFFFFF 0 50%) 0 0/2px 2px"></div>
<div class="a" style="left:990px;top:126px;width:17px;height:18px;background:#F0EEE4;border-left:1px solid #fff;border-top:1px solid #fff;border-right:1px solid #716F64;border-bottom:1px solid #716F64"></div>
<svg class="a" style="left:995px;top:132px" width="8" height="5" viewBox="0 0 8 5"><polygon points="0,4.5 8,4.5 4,0.5" fill="#000"/></svg>
<div class="a" style="left:991px;top:600px;width:16px;height:135px;background:#EAE8D8;border-left:1px solid #F8F8F0;border-top:1px solid #F8F8F0;border-right:1px solid #716F64;border-bottom:1px solid #716F64"></div>
<div class="a" style="left:990px;top:735px;width:17px;height:17px;background:#F0EEE4;border-left:1px solid #fff;border-top:1px solid #fff;border-right:1px solid #716F64;border-bottom:1px solid #716F64"></div>
<svg class="a" style="left:995px;top:742px" width="8" height="5" viewBox="0 0 8 5"><polygon points="0,0.5 8,0.5 4,4.5" fill="#000"/></svg>
<!-- right/bottom frame stripes -->
<div class="a" style="left:1014px;top:60px;width:6px;height:29px;background:#E2E2DA"></div>
<div class="a" style="left:1008px;top:89px;width:12px;height:675px;background:linear-gradient(90deg,#E4E4EC 0 2px,#A89C84 2px 3px,#6C6850 3px 4px,#C8C8C0 4px 7px,#6C706C 7px 8px,#C8CCD4 8px 10px,#B0A890 10px 11px,#7C84B0 11px 12px)"></div>
<div class="a" style="left:0px;top:752px;width:1020px;height:12px;background:linear-gradient(#E4E4E0 0 2px,#8A7E78 2px 3px,#686060 3px 4px,#C8C8CC 4px 6px,#8A8A80 6px 7px,#686858 7px 8px,#C8C8C4 8px 10px,#C0B0A0 10px 11px,#7C84B0 11px 12px)"></div>
<div id="rframe" class="a"></div>
<div id="bframe" class="a"></div>
</body></html>
